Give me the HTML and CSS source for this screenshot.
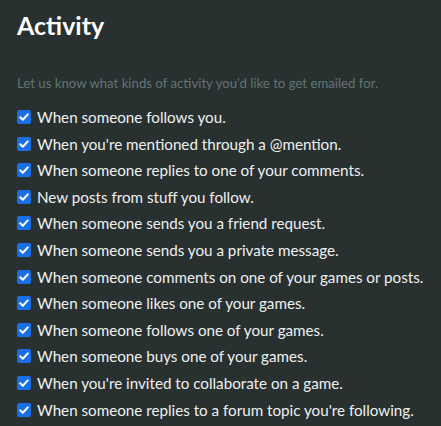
FILE: index.html
```html
<!DOCTYPE html>
<html>
<head>
<meta charset="utf-8">
<link rel="stylesheet" href="styles.css">
</head>
<body>
<div class="page">
  <h1 class="title">Activity</h1>
  <p class="subtitle">Let us know what kinds of activity you'd like to get emailed for.</p>
  <ul class="options">
    <li class="option"><span class="box"><svg viewBox="0 0 14 14" width="14" height="14"><path d="M3.2 7.2 L5.8 9.7 L10.8 4.4" fill="none" stroke="#fff" stroke-width="2" stroke-linecap="round" stroke-linejoin="round"/></svg></span><span class="label">When someone follows you.</span></li>
    <li class="option"><span class="box"><svg viewBox="0 0 14 14" width="14" height="14"><path d="M3.2 7.2 L5.8 9.7 L10.8 4.4" fill="none" stroke="#fff" stroke-width="2" stroke-linecap="round" stroke-linejoin="round"/></svg></span><span class="label">When you're mentioned through a @mention.</span></li>
    <li class="option"><span class="box"><svg viewBox="0 0 14 14" width="14" height="14"><path d="M3.2 7.2 L5.8 9.7 L10.8 4.4" fill="none" stroke="#fff" stroke-width="2" stroke-linecap="round" stroke-linejoin="round"/></svg></span><span class="label">When someone replies to one of your comments.</span></li>
    <li class="option"><span class="box"><svg viewBox="0 0 14 14" width="14" height="14"><path d="M3.2 7.2 L5.8 9.7 L10.8 4.4" fill="none" stroke="#fff" stroke-width="2" stroke-linecap="round" stroke-linejoin="round"/></svg></span><span class="label">New posts from stuff you follow.</span></li>
    <li class="option"><span class="box"><svg viewBox="0 0 14 14" width="14" height="14"><path d="M3.2 7.2 L5.8 9.7 L10.8 4.4" fill="none" stroke="#fff" stroke-width="2" stroke-linecap="round" stroke-linejoin="round"/></svg></span><span class="label">When someone sends you a friend request.</span></li>
    <li class="option"><span class="box"><svg viewBox="0 0 14 14" width="14" height="14"><path d="M3.2 7.2 L5.8 9.7 L10.8 4.4" fill="none" stroke="#fff" stroke-width="2" stroke-linecap="round" stroke-linejoin="round"/></svg></span><span class="label">When someone sends you a private message.</span></li>
    <li class="option"><span class="box"><svg viewBox="0 0 14 14" width="14" height="14"><path d="M3.2 7.2 L5.8 9.7 L10.8 4.4" fill="none" stroke="#fff" stroke-width="2" stroke-linecap="round" stroke-linejoin="round"/></svg></span><span class="label">When someone comments on one of your games or posts.</span></li>
    <li class="option"><span class="box"><svg viewBox="0 0 14 14" width="14" height="14"><path d="M3.2 7.2 L5.8 9.7 L10.8 4.4" fill="none" stroke="#fff" stroke-width="2" stroke-linecap="round" stroke-linejoin="round"/></svg></span><span class="label">When someone likes one of your games.</span></li>
    <li class="option"><span class="box"><svg viewBox="0 0 14 14" width="14" height="14"><path d="M3.2 7.2 L5.8 9.7 L10.8 4.4" fill="none" stroke="#fff" stroke-width="2" stroke-linecap="round" stroke-linejoin="round"/></svg></span><span class="label">When someone follows one of your games.</span></li>
    <li class="option"><span class="box"><svg viewBox="0 0 14 14" width="14" height="14"><path d="M3.2 7.2 L5.8 9.7 L10.8 4.4" fill="none" stroke="#fff" stroke-width="2" stroke-linecap="round" stroke-linejoin="round"/></svg></span><span class="label">When someone buys one of your games.</span></li>
    <li class="option"><span class="box"><svg viewBox="0 0 14 14" width="14" height="14"><path d="M3.2 7.2 L5.8 9.7 L10.8 4.4" fill="none" stroke="#fff" stroke-width="2" stroke-linecap="round" stroke-linejoin="round"/></svg></span><span class="label">When you're invited to collaborate on a game.</span></li>
    <li class="option"><span class="box"><svg viewBox="0 0 14 14" width="14" height="14"><path d="M3.2 7.2 L5.8 9.7 L10.8 4.4" fill="none" stroke="#fff" stroke-width="2" stroke-linecap="round" stroke-linejoin="round"/></svg></span><span class="label">When someone replies to a forum topic you're following.</span></li>
  </ul>
</div>
</body>
</html>
```
FILE: styles.css
```css
html, body {
  margin: 0;
  padding: 0;
  background: #283030;
}
.page {
  padding: 9px 17px 0 17px;
  font-family: Lato, "Liberation Sans", sans-serif;
}
.title {
  margin: 0;
  font-size: 25px;
  line-height: 32px;
  font-weight: 700;
  color: #ffffff;
}
.subtitle {
  margin: 34px 0 0 0;
  font-size: 13.2px;
  line-height: 16px;
  color: #637474;
}
.options {
  list-style: none;
  margin: 16px 0 0 0;
  padding: 0;
  display: flex;
  flex-direction: column;
  gap: 6.6px;
}
.option {
  display: flex;
  align-items: center;
  gap: 6px;
  height: 20px;
}
.box {
  width: 14px;
  height: 14px;
  border-radius: 2px;
  background: #1a6fe6;
  display: flex;
  flex: none;
}
.label {
  font-size: 15.2px;
  color: #eef0f0;
}
```
